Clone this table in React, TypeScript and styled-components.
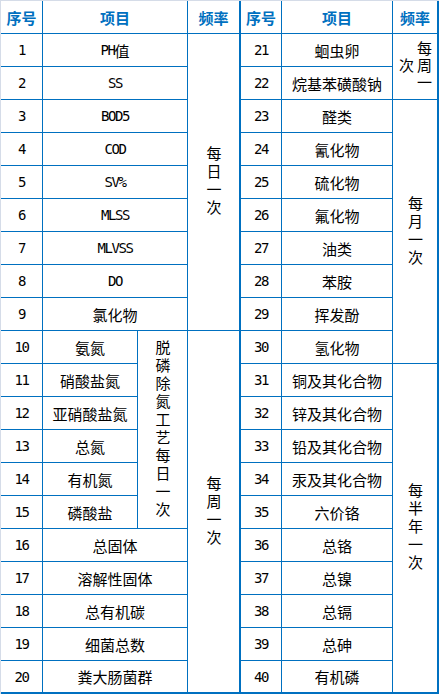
import React from "react";
import styled, { createGlobalStyle } from "styled-components";

const BLUE = "#0070c0";

const Global = createGlobalStyle`
  html, body { margin: 0; padding: 0; }
  body {
    background: #d5dce8;
    padding: 1px 0 0 1px;
    font-family: "Noto Sans CJK SC", sans-serif;
  }
`;

const Board = styled.div`
  display: flex;
  gap: 2px;
  width: 438px;
  box-sizing: border-box;
  padding: 0 2px 2px 0;
  background: ${BLUE};
`;

const Grid = styled.div<{ $cols: string }>`
  display: grid;
  grid-template-columns: ${(p) => p.$cols};
  grid-template-rows: repeat(20, 32px) 31px;
  gap: 1px;
`;

const Cell = styled.div<{ $span?: number; $rows?: number; $head?: boolean }>`
  grid-column: span ${(p) => p.$span ?? 1};
  grid-row: span ${(p) => p.$rows ?? 1};
  background: #fff;
  display: flex;
  align-items: center;
  justify-content: center;
  font-size: 15px;
  line-height: 1;
  white-space: nowrap;
  color: ${(p) => (p.$head ? BLUE : "#000")};
  font-weight: ${(p) => (p.$head ? 700 : 400)};
`;

const Latin = styled.span`
  font-family: "DejaVu Sans Mono", monospace;
  font-size: 14px;
  letter-spacing: -1.4px;
`;

const VText = styled.span<{ $step: number; $extent?: number }>`
  writing-mode: vertical-rl;
  inline-size: ${(p) => (p.$extent ? `${p.$extent}px` : "max-content")};
  letter-spacing: ${(p) => p.$step - 15}px;
  line-height: 18px;
  text-align: center;
  white-space: normal;
`;

const mixed = (text: string) =>
  text.split(/([A-Za-z0-9%]+)/).map((part, i) =>
    /^[A-Za-z0-9%]+$/.test(part) ? <Latin key={i}>{part}</Latin> : part
  );

type Row = { n: number; item: string };

const Header = () => (
  <>
    <Cell $head>序号</Cell>
    <Cell $head $span={2}>
      项目
    </Cell>
    <Cell $head>频率</Cell>
  </>
);

const Num = ({ n }: { n: number }) => (
  <Cell>
    <Latin>{n}</Latin>
  </Cell>
);

const leftTop: Row[] = [
  { n: 1, item: "PH值" },
  { n: 2, item: "SS" },
  { n: 3, item: "BOD5" },
  { n: 4, item: "COD" },
  { n: 5, item: "SV%" },
  { n: 6, item: "MLSS" },
  { n: 7, item: "MLVSS" },
  { n: 8, item: "DO" },
  { n: 9, item: "氯化物" },
];
const leftMid: Row[] = [
  { n: 10, item: "氨氮" },
  { n: 11, item: "硝酸盐氮" },
  { n: 12, item: "亚硝酸盐氮" },
  { n: 13, item: "总氮" },
  { n: 14, item: "有机氮" },
  { n: 15, item: "磷酸盐" },
];
const leftBottom: Row[] = [
  { n: 16, item: "总固体" },
  { n: 17, item: "溶解性固体" },
  { n: 18, item: "总有机碳" },
  { n: 19, item: "细菌总数" },
  { n: 20, item: "粪大肠菌群" },
];

type Group = { rows: string[]; start: number; freq: string; step: number; extent?: number };
const rightGroups: Group[] = [
  { start: 21, rows: ["蛔虫卵", "烷基苯磺酸钠"], freq: "每周一次", step: 17, extent: 54 },
  {
    start: 23,
    rows: ["醛类", "氰化物", "硫化物", "氟化物", "油类", "苯胺", "挥发酚", "氢化物"],
    freq: "每月一次",
    step: 18,
  },
  {
    start: 31,
    rows: ["铜及其化合物", "锌及其化合物", "铅及其化合物", "汞及其化合物", "六价铬", "总铬", "总镍", "总镉", "总砷", "有机磷"],
    freq: "每半年一次",
    step: 18,
  },
];

export default function App() {
  return (
    <>
      <Global />
      <Board>
        <Grid $cols="41px 94px 49px 51px">
          <Header />
          {leftTop.map((r, i) => (
            <React.Fragment key={r.n}>
              <Num n={r.n} />
              <Cell $span={2}>{mixed(r.item)}</Cell>
              {i === 0 && (
                <Cell $rows={9}>
                  <VText $step={18}>每日一次</VText>
                </Cell>
              )}
            </React.Fragment>
          ))}
          {leftMid.map((r, i) => (
            <React.Fragment key={r.n}>
              <Num n={r.n} />
              <Cell>{r.item}</Cell>
              {i === 0 && (
                <>
                  <Cell $rows={6}>
                    <VText $step={18}>脱磷除氮工艺每日一次</VText>
                  </Cell>
                  <Cell $rows={11}>
                    <VText $step={18}>每周一次</VText>
                  </Cell>
                </>
              )}
            </React.Fragment>
          ))}
          {leftBottom.map((r) => (
            <React.Fragment key={r.n}>
              <Num n={r.n} />
              <Cell $span={2}>{r.item}</Cell>
            </React.Fragment>
          ))}
        </Grid>
        <Grid $cols="40px 110px 44px">
          <Cell $head>序号</Cell>
          <Cell $head>项目</Cell>
          <Cell $head>频率</Cell>
          {rightGroups.map((g) =>
            g.rows.map((item, i) => (
              <React.Fragment key={g.start + i}>
                <Num n={g.start + i} />
                <Cell>{item}</Cell>
                {i === 0 && (
                  <Cell $rows={g.rows.length}>
                    <VText $step={g.step} $extent={g.extent}>
                      {g.freq}
                    </VText>
                  </Cell>
                )}
              </React.Fragment>
            ))
          )}
        </Grid>
      </Board>
    </>
  );
}
